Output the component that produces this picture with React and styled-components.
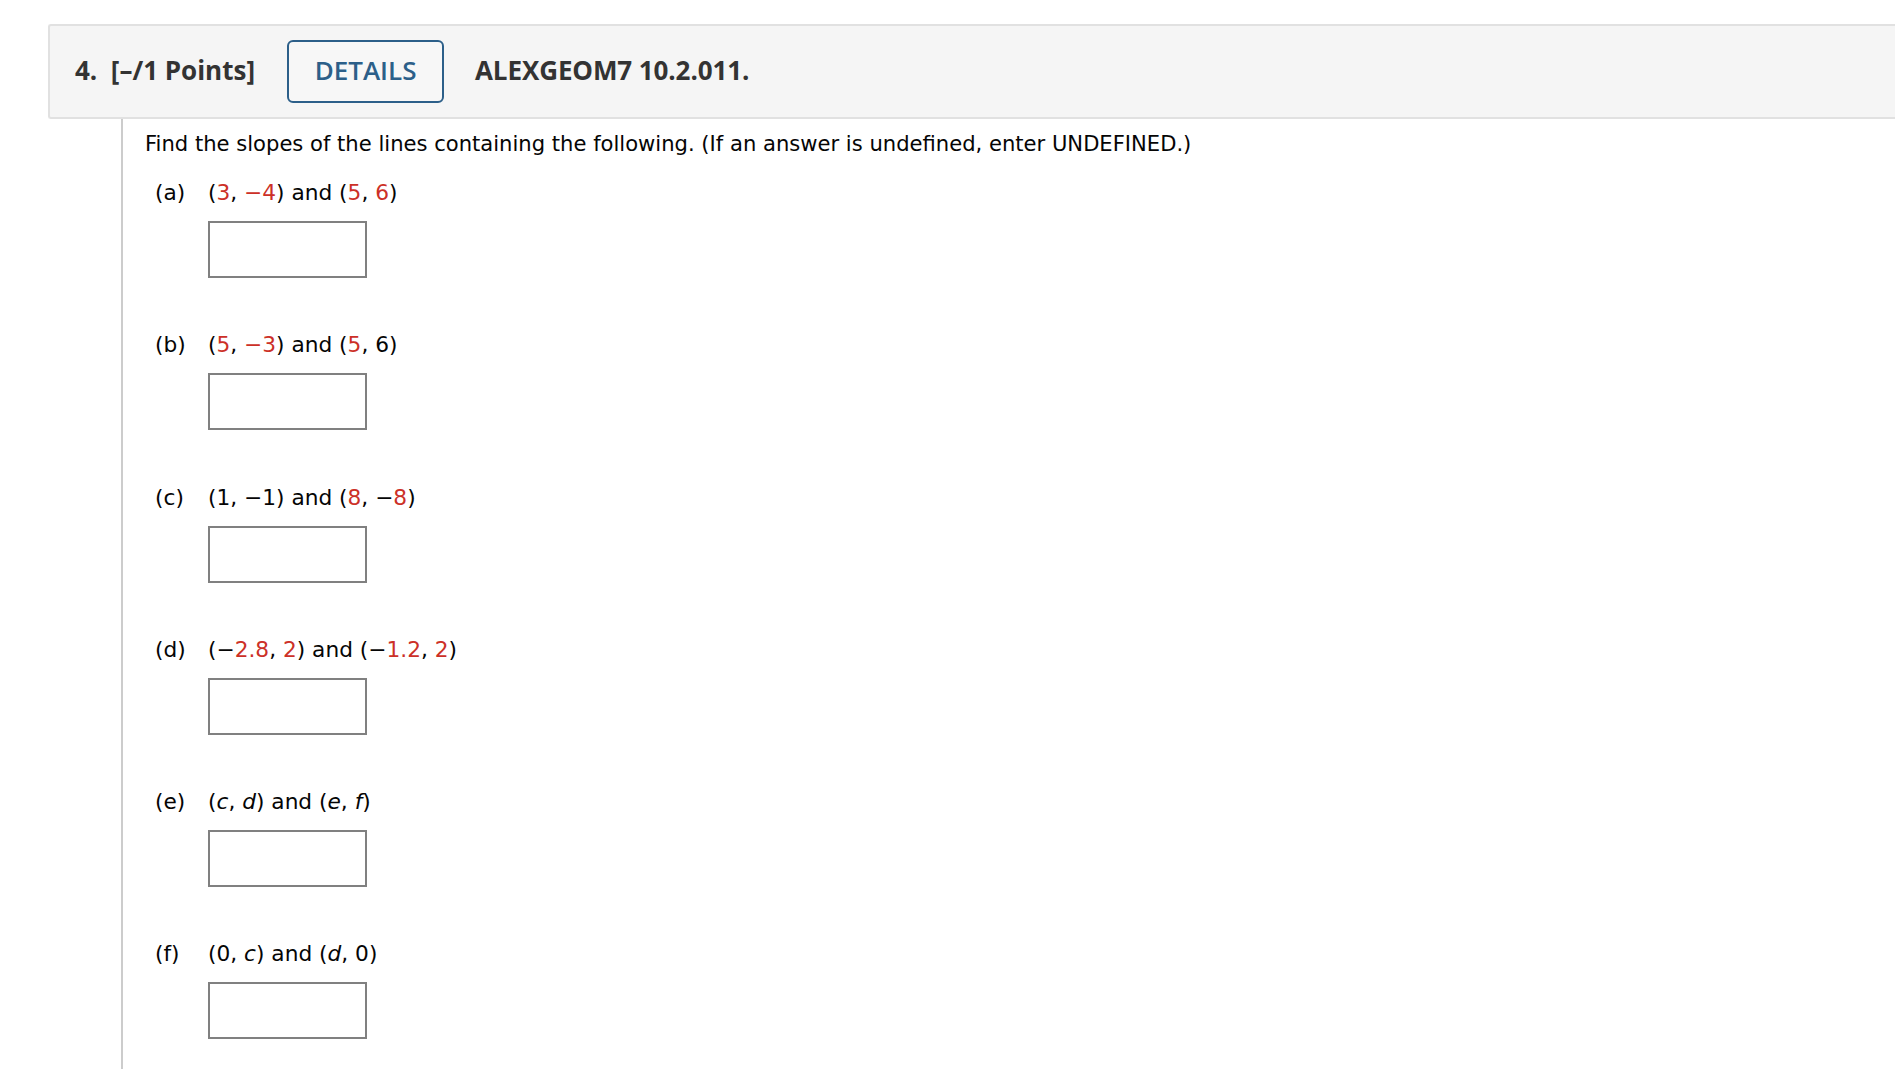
import React from "react";
import styled, { createGlobalStyle } from "styled-components";

const Global = createGlobalStyle`
  html, body { margin: 0; padding: 0; background: #ffffff; }
  body { font-family: "DejaVu Sans", Verdana, sans-serif; }
`;

const Page = styled.div`
  padding: 24px 0 0 48px;
  min-height: 1045px;
  display: flex;
  flex-direction: column;
`;

const Header = styled.div`
  box-sizing: border-box;
  height: 95px;
  display: flex;
  align-items: center;
  background: #f5f5f5;
  border: 2px solid #e1e1e1;
  border-right: none;
  border-radius: 3px 0 0 3px;
  padding-left: 25px;
  font-family: "Open Sans", sans-serif;
  font-weight: 700;
  color: #333333;
`;

const Points = styled.span`
  font-size: 26px;
  letter-spacing: 0;
  white-space: pre;
  margin-bottom: 4px;
`;

const DetailsButton = styled.button`
  box-sizing: border-box;
  margin-left: 32px;
  width: 157px;
  height: 63px;
  border: 2px solid #2c5f89;
  border-radius: 6px;
  background: #f7f7f7;
  color: #2c5f89;
  font-family: "Open Sans", sans-serif;
  font-weight: 600;
  font-size: 26px;
  letter-spacing: 0;
  padding: 0 0 3px;
`;

const Title = styled.span`
  margin-left: 31px;
  margin-bottom: 4px;
  font-size: 26px;
  letter-spacing: -0.1px;
`;

const Body = styled.div`
  flex: 1;
  margin-left: 73px;
  border-left: 2px solid #cccccc;
  padding: 13px 0 0 22px;
  color: #050505;
`;

const Prompt = styled.div`
  font-size: 21.1px;
  line-height: 24px;
  margin-bottom: 23px;
`;

const Item = styled.div`
  padding-left: 10px;
  margin-bottom: 53.3px;
`;

const LabelRow = styled.div`
  display: flex;
  align-items: center;
  height: 28px;
  font-size: 21.7px;
  line-height: 28px;
`;

const Letter = styled.span`
  width: 53px;
  flex: none;
`;

const Red = styled.span`
  color: #cc3027;
`;

const AnswerBox = styled.input`
  box-sizing: border-box;
  display: block;
  margin: 14px 0 0 53px;
  width: 159px;
  height: 57px;
  border: 2px solid #808080;
  background: #ffffff;
  outline: none;
  font-size: 20px;
`;

const M = "\u2212";

const items = [
  {
    k: "a",
    body: (
      <>
        (<Red>3</Red>, <Red>{M}4</Red>) and (<Red>5</Red>, <Red>6</Red>)
      </>
    ),
  },
  {
    k: "b",
    body: (
      <>
        (<Red>5</Red>, <Red>{M}3</Red>) and (<Red>5</Red>, 6)
      </>
    ),
  },
  {
    k: "c",
    body: (
      <>
        (1, {M}1) and (<Red>8</Red>, {M}<Red>8</Red>)
      </>
    ),
  },
  {
    k: "d",
    body: (
      <>
        ({M}<Red>2.8</Red>, <Red>2</Red>) and ({M}<Red>1.2</Red>, <Red>2</Red>)
      </>
    ),
  },
  {
    k: "e",
    body: (
      <>
        (<i>c</i>, <i>d</i>) and (<i>e</i>, <i>f</i>)
      </>
    ),
  },
  {
    k: "f",
    body: (
      <>
        (0, <i>c</i>) and (<i>d</i>, 0)
      </>
    ),
  },
];

export default function App() {
  return (
    <>
      <Global />
      <Page>
        <Header>
          <Points>{"4.  [\u2013/1 Points]"}</Points>
          <DetailsButton>DETAILS</DetailsButton>
          <Title>ALEXGEOM7 10.2.011.</Title>
        </Header>
        <Body>
          <Prompt>
            Find the slopes of the lines containing the following. (If an answer is undefined, enter UNDEFINED.)
          </Prompt>
          {items.map((it) => (
            <Item key={it.k}>
              <LabelRow>
                <Letter>({it.k})</Letter>
                <span>{it.body}</span>
              </LabelRow>
              <AnswerBox type="text" aria-label={`answer ${it.k}`} />
            </Item>
          ))}
        </Body>
      </Page>
    </>
  );
}
